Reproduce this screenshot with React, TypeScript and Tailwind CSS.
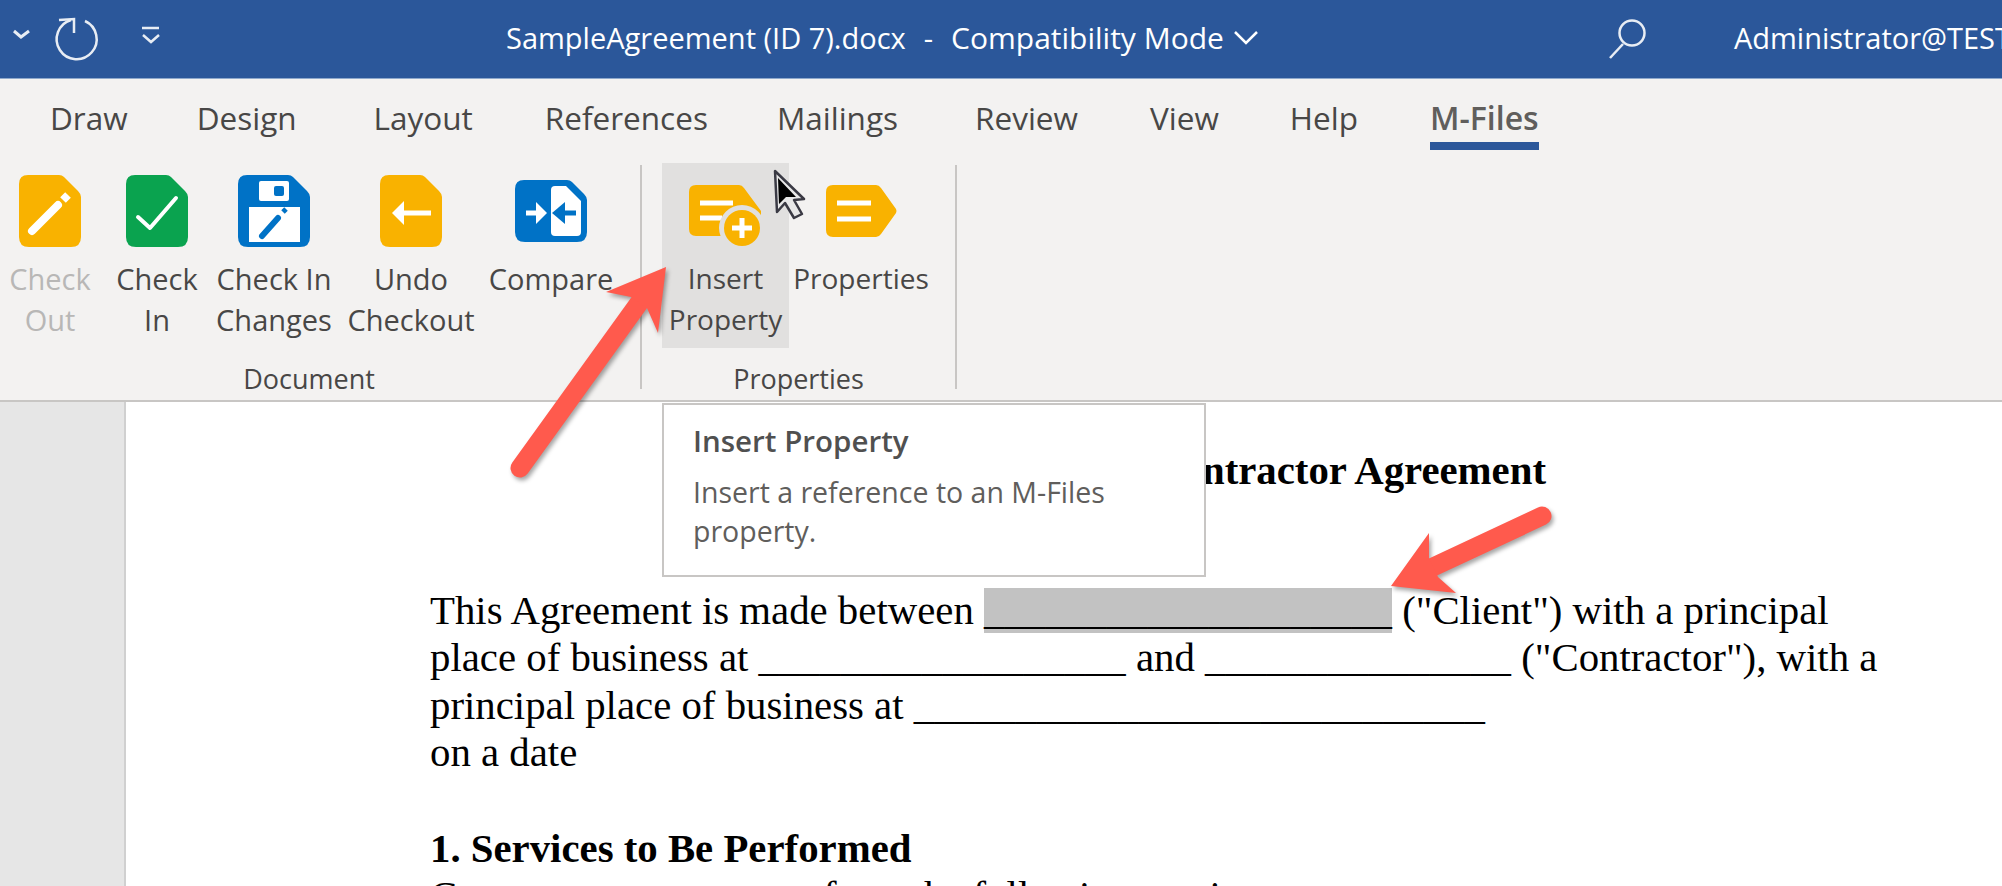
const tabs = [
  { name: 'Draw', cls: '' },
  { name: 'Design', cls: 'ml-[-3px]' },
  { name: 'Layout', cls: 'ml-[5px]' },
  { name: 'References', cls: '' },
  { name: 'Mailings', cls: 'ml-[-3px]' },
  { name: 'Review', cls: 'ml-[5px]' },
  { name: 'View', cls: '' },
  { name: 'Help', cls: 'ml-[-1px]' },
];

function DocIcon({ children }: { children: React.ReactNode }) {
  return <svg width="62" height="72" viewBox="0 0 62 72">{children}</svg>;
}

const docShape = 'M9 0H40Q43 0 45 2L59 16Q62 19 62 22V62Q62 72 52 72H10Q0 72 0 62V9Q0 0 9 0Z';

function CheckOutIcon() {
  return (
    <DocIcon>
      <path d={docShape} fill="#f9b200" />
      <path d="M13 56L39 30" stroke="#fff" strokeWidth="8" strokeLinecap="round" />
      <path d="M44 25L49 20" stroke="#fff" strokeWidth="8" />
    </DocIcon>
  );
}

function CheckInIcon() {
  return (
    <DocIcon>
      <path d={docShape} fill="#0aa34f" />
      <path d="M12 42L24 53L50 23" stroke="#fff" strokeWidth="4" fill="none" strokeLinecap="round" strokeLinejoin="round" />
    </DocIcon>
  );
}

function SaveIcon() {
  return (
    <svg width="72" height="72" viewBox="0 0 72 72">
      <path d="M9 0H50Q53 0 55 2L69 16Q72 19 72 22V62Q72 72 62 72H10Q0 72 0 62V9Q0 0 9 0Z" fill="#0072c6" />
      <rect x="21" y="6" width="30" height="20" rx="2" fill="#fff" />
      <rect x="36" y="11" width="10" height="10" rx="2" fill="#0072c6" />
      <rect x="11" y="32" width="51" height="35" fill="#fff" />
      <path d="M24 61L40 43" stroke="#0072c6" strokeWidth="6" strokeLinecap="round" />
      <path d="M45 37L48 34" stroke="#0072c6" strokeWidth="5" />
    </svg>
  );
}

function UndoIcon() {
  return (
    <DocIcon>
      <path d={docShape} fill="#f9b200" />
      <path d="M22 38H51" stroke="#fff" strokeWidth="5" />
      <path d="M12 38L24 26V50Z" fill="#fff" />
    </DocIcon>
  );
}

function CompareIcon() {
  return (
    <svg width="72" height="62" viewBox="0 0 72 62">
      <path d="M9 0H52Q55 0 57 2L69 14Q72 17 72 20V52Q72 62 62 62H10Q0 62 0 52V9Q0 0 9 0Z" fill="#0072c6" />
      <path d="M40 6H51L66 21V52Q66 56 62 56H40Q36 56 36 52V10Q36 6 40 6Z" fill="#fff" />
      <path d="M11 33H24" stroke="#fff" strokeWidth="5" />
      <path d="M32 33L21 22V44Z" fill="#fff" />
      <path d="M46 33H61" stroke="#0072c6" strokeWidth="5" />
      <path d="M37 33L50 22V44Z" fill="#0072c6" />
    </svg>
  );
}

function InsertPropertyIcon() {
  return (
    <svg width="73" height="62" viewBox="0 0 73 62">
      <path d="M7 0H50Q53 0 55 3L72 26V51H7Q0 51 0 44V7Q0 0 7 0Z" fill="#f9b200" />
      <path d="M11 18H44M11 33H33" stroke="#fff" strokeWidth="5" />
      <circle cx="53" cy="43" r="23" fill="#e1e0df" />
      <circle cx="53" cy="43" r="18" fill="#f9b200" />
      <path d="M53 33V53M43 43H63" stroke="#fff" strokeWidth="5" />
    </svg>
  );
}

function PropertiesIcon() {
  return (
    <svg width="71" height="52" viewBox="0 0 71 52">
      <path d="M7 0H50Q53 0 55 3L70 24Q71 26 70 28L55 49Q53 52 50 52H7Q0 52 0 45V7Q0 0 7 0Z" fill="#f9b200" />
      <path d="M11 18H45M11 34H45" stroke="#fff" strokeWidth="5" />
    </svg>
  );
}

function RibbonButton({ className, icon, line1, line2, disabled }: { className: string; icon: React.ReactNode; line1: string; line2?: string; disabled?: boolean }) {
  return (
    <div className={`flex flex-col items-center shrink-0 leading-[41px] whitespace-nowrap ${disabled ? 'text-[#b8b7b6]' : 'text-[#484746]'} ${className}`}>
      <div className="h-[93px] pt-[10px] flex justify-center">{icon}</div>
      <div>{line1}</div>
      {line2 && <div>{line2}</div>}
    </div>
  );
}

export default function App() {
  return (
    <div className="relative w-[2002px] h-[886px] overflow-hidden bg-white font-['Open_Sans',sans-serif]">
      {/* title bar */}
      <div className="relative h-[79px] bg-[#2b579a] border-b border-[#8fa9cc] flex items-center text-white text-[29px] whitespace-nowrap">
        <svg width="175" height="78" viewBox="0 0 175 78" className="shrink-0" fill="none" stroke="#e8edf4">
          <path d="M14 31L21 37L29 31" strokeWidth="3" />
          <path d="M85 21A20 20 0 1 1 71 20" strokeWidth="2.5" />
          <path d="M59 20L74 19V33" strokeWidth="2.5" />
          <path d="M142 28H159" strokeWidth="2.5" />
          <path d="M143 35L151 42L159 35" strokeWidth="2.5" />
        </svg>
        <div className="ml-[331px] mb-[3px] flex items-center shrink-0">
          <span>SampleAgreement (ID 7).docx</span>
          <span className="ml-[18px]">-</span>
          <span className="ml-[18px] text-[30px]">Compatibility Mode</span>
          <svg width="24" height="14" viewBox="0 0 24 14" className="ml-[10px] shrink-0" fill="none" stroke="#fff" strokeWidth="2.5">
            <path d="M1 1L12 12L23 1" />
          </svg>
        </div>
        <svg width="38" height="40" viewBox="0 0 38 40" className="ml-[351px] shrink-0" fill="none" stroke="#e8edf4" strokeWidth="2.5">
          <circle cx="23" cy="14" r="12.5" />
          <path d="M14 25L1 39" />
        </svg>
        <span className="ml-[87px] mb-[3px] shrink-0">Administrator@TEST</span>
      </div>

      {/* ribbon */}
      <div className="h-[323px] bg-[#f3f2f1] border-b-2 border-[#c8c6c4] text-[#484746]">
        <div className="h-[86px] flex pl-[50px] gap-[72px] text-[31.5px] leading-[78px]">
          {tabs.map((t) => (
            <div key={t.name} className={t.cls}>{t.name}</div>
          ))}
          <div className="relative font-semibold text-[32px] text-[#605e5c]">
            M-Files
            <div className="absolute left-0 right-0 top-[63px] h-[8px] bg-[#2b579a]" />
          </div>
        </div>
        <div className="flex h-[235px]">
          <div className="w-[640px] flex flex-col shrink-0">
            <div className="flex h-[190px] shrink-0">
              <RibbonButton className="w-[100px] text-[29px]" icon={<CheckOutIcon />} line1="Check" line2="Out" disabled />
              <RibbonButton className="w-[114px] text-[29px]" icon={<CheckInIcon />} line1="Check" line2="In" />
              <RibbonButton className="w-[120px] text-[29px]" icon={<SaveIcon />} line1="Check In" line2="Changes" />
              <RibbonButton className="w-[154px] text-[29px]" icon={<UndoIcon />} line1="Undo" line2="Checkout" />
              <RibbonButton className="w-[126px] text-[29px]" icon={<div className="pt-[5px]"><CompareIcon /></div>} line1="Compare" />
            </div>
            <div className="pr-[22px] text-center text-[27px] leading-[48px] shrink-0">Document</div>
          </div>
          <div className="w-[2px] h-[224px] bg-[#c8c6c4] shrink-0" />
          <div className="w-[313px] flex flex-col shrink-0">
            <div className="flex h-[190px] pl-[20px] shrink-0">
              <div className="w-[127px] h-[185px] mt-[-2px] bg-[#e1e0df]">
                <div className="pt-[2px]">
                  <RibbonButton className="w-[127px] text-[28px]" icon={<div className="pt-[10px]"><InsertPropertyIcon /></div>} line1="Insert" line2="Property" />
                </div>
              </div>
              <RibbonButton className="w-[144px] text-[28px]" icon={<div className="pt-[10px]"><PropertiesIcon /></div>} line1="Properties" />
            </div>
            <div className="text-center text-[27px] leading-[48px] shrink-0">Properties</div>
          </div>
          <div className="w-[2px] h-[224px] bg-[#c8c6c4] shrink-0" />
        </div>
      </div>

      {/* document */}
      <div className="flex h-[484px]">
        <div className="w-[126px] bg-[#e6e6e6] border-r-2 border-[#d0d0d0] shrink-0" />
        <div className="flex-1 pl-[304px] pt-[45px] font-['Liberation_Serif',serif] text-[40.8px] leading-[47.6px] text-black whitespace-pre">
          <div className="w-[1116px] flex justify-end font-bold">Independent Contractor Agreement</div>
          <div className="mt-[92px]">
            This Agreement is made between <span className="bg-[#c2c2c2]">____________________</span> ("Client") with a principal
          </div>
          <div>place of business at __________________ and _______________ ("Contractor"), with a</div>
          <div>principal place of business at ____________________________</div>
          <div>on a date</div>
          <div className="h-[47.6px]" />
          <div className="font-bold">1. Services to Be Performed</div>
          <div>Contractor agrees to perform the following services:</div>
        </div>
      </div>

      {/* hover tooltip */}
      <div className="absolute left-[662px] top-[403px] w-[544px] h-[174px] bg-white border-2 border-[#c8c6c4] pl-[29px] pt-[14px] text-[28.5px] text-[#605e5c]">
        <div className="font-semibold text-[29.5px] leading-[44px] text-[#505050]">Insert Property</div>
        <div className="mt-[10px] leading-[39px]">Insert a reference to an M-Files<br />property.</div>
      </div>

      {/* annotation arrows and pointer */}
      <svg width="2002" height="886" viewBox="0 0 2002 886" className="absolute left-0 top-0 pointer-events-none">
        <g className="drop-shadow-[2px_3px_2px_rgba(0,0,0,0.35)]">
          <path d="M520 468L639 303" stroke="#ff5a4d" strokeWidth="19" strokeLinecap="round" />
          <path d="M666 267L606 292L631 297L647 308L658 333Z" fill="#ff5a4d" />
          <path d="M1542 516L1433 567" stroke="#ff5a4d" strokeWidth="19" strokeLinecap="round" />
          <path d="M1391 586L1429 533L1429 558L1438 577L1456 593Z" fill="#ff5a4d" />
        </g>
        <path d="M775 171L777 212L785 203L794 218L802 214L794 200L804 199Z" fill="#e8e8e8" stroke="#3a3a44" strokeWidth="2.5" strokeLinejoin="round" />
        <path d="M778 178L779 204L786 197L796 197Z" fill="#000" />
      </svg>
    </div>
  );
}
